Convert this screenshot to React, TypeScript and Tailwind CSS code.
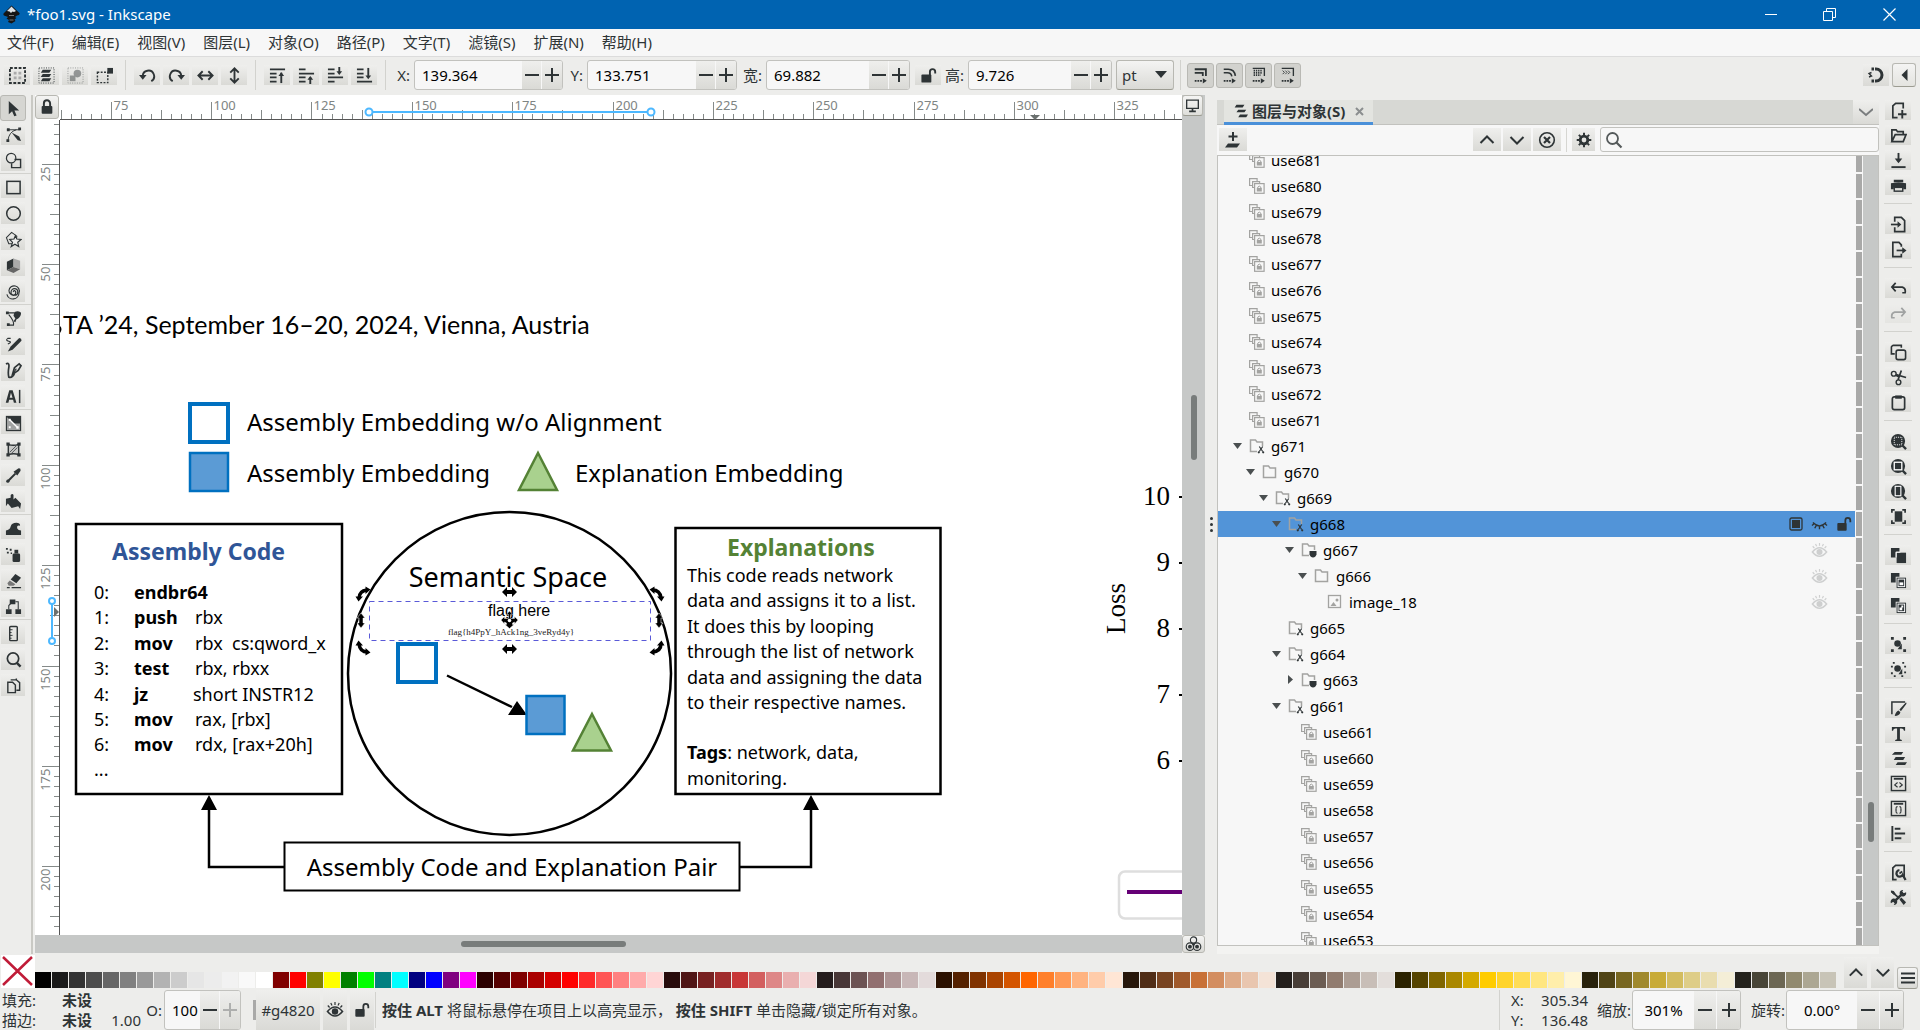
import React from 'react';

type Kids = { children?: React.ReactNode };

function Ico({ children, w = 18, h = 18, box = '0 0 18 18' }: Kids & { w?: number; h?: number; box?: string }) {
  return (
    <svg width={w} height={h} viewBox={box} fill="none" stroke="#2e3436" strokeWidth={1.5} aria-hidden="true" className="shrink-0">
      {children}
    </svg>
  );
}

const F = { fill: '#2e3436', stroke: 'none' };

function Btn({ label, children, className = 'h-5 w-[26px]' }: Kids & { label: string; className?: string }) {
  return (
    <button aria-label={label} title={label} className={'flex shrink-0 items-center justify-center bg-linear-to-b from-[#efefed] to-[#dadad6] ' + className}>
      {children}
    </button>
  );
}

function Sep({ className = 'mx-2' }: { className?: string }) {
  return <div className={'h-[30px] w-px shrink-0 bg-[#d2d2ce] ' + className} />;
}

const padlock = (
  <>
    <rect x="3" y="8" width="12" height="8.5" rx="1" {...F} />
    <path d="M5.5 8.5V5a3.5 3.5 0 0 1 7 0v3.5" strokeWidth="2.2" />
  </>
);
const openLock = (
  <>
    <rect x="1.5" y="8" width="10.5" height="8.5" rx="1" {...F} />
    <path d="M10.5 8.5V5a2.8 2.8 0 0 1 5.6 0v2" strokeWidth="2" />
  </>
);
const eye = (
  <>
    <path d="M1.500 10.500q7.500-9 15 0q-7.500 9-15 0z" strokeWidth="1.600" />
    <circle cx="9" cy="10.500" r="3.200" {...F} />
    <path d="M9 4V1M6 4.600L4.800 2M12 4.600L13.200 2M3.600 6.500L1.800 4.500M14.400 6.500l1.800-2" strokeWidth="1.200" />
  </>
);

/* ---------- Window header ---------- */

function TitleBar() {
  return (
    <header className="flex h-[29px] shrink-0 items-center bg-[#0063b1] pl-[3px] text-white">
      <svg width="17" height="19" viewBox="0 0 17 19" aria-hidden="true">
        <path d="M8.500 0.500L16.500 8q.8 2-2.500 2.500l-2 1.500 1.500 1-2 1.500 1 1.500L8.500 18.500 5 17l1-2-2.500-1.500L5 12 1 10.500Q-.2 9 1 8z" fill="#151515" />
        <path d="M8.500 1.500L13 6l-2 1-1.500-.6L8 8 6.500 6.500 4 6z" fill="#dfe3e6" />
        <path d="M6 10.500h5M6.500 15h4" stroke="#777" />
      </svg>
      <h1 className="ml-[7px] flex-1 truncate text-[15px]">*foo1.svg - Inkscape</h1>
      <button aria-label="最小化" className="flex h-full w-[58px] items-center justify-center">
        <svg width="12" height="12" stroke="#fff" aria-hidden="true"><path d="M0 5.500h12" /></svg>
      </button>
      <button aria-label="还原" className="flex h-full w-[58px] items-center justify-center">
        <svg width="13" height="13" stroke="#fff" fill="none" aria-hidden="true"><path d="M.5 3.500h9v9h-9zM3.500 3V.5h9v9H10" /></svg>
      </button>
      <button aria-label="关闭" className="flex h-full w-[62px] items-center justify-center">
        <svg width="13" height="13" stroke="#fff" strokeWidth="1.200" aria-hidden="true"><path d="M.5.5l12 12M12.500.5l-12 12" /></svg>
      </button>
    </header>
  );
}

const MENUS = ['文件(F)', '编辑(E)', '视图(V)', '图层(L)', '对象(O)', '路径(P)', '文字(T)', '滤镜(S)', '扩展(N)', '帮助(H)'];

function MenuBar() {
  return (
    <nav className="flex h-[28px] shrink-0 items-center gap-[18px] border-b border-[#dcdcdc] bg-[#f7f7f7] pl-[7px]">
      {MENUS.map((m) => (
        <button key={m}>{m}</button>
      ))}
    </nav>
  );
}

/* ---------- Tool options ---------- */

function Spin({ label, value, labelClass, className, center, dimPlus }: { label: string; value: string; labelClass: string; className: string; center?: boolean; dimPlus?: boolean }) {
  const bw = center ? 'w-[23px]' : 'w-5';
  return (
    <div className="flex h-full shrink-0 items-center">
      <label htmlFor={'f-' + label} className={'shrink-0 text-right ' + labelClass}>{label}</label>
      <div className={'flex h-full overflow-hidden rounded-[3px] border border-[#c2c2be] bg-[#f7f7f7] ' + className}>
        <input id={'f-' + label} defaultValue={value} className={'min-w-0 flex-1 bg-transparent text-black outline-none ' + (center ? 'text-center' : 'pl-[7px]')} />
        <button aria-label={label + ' −'} className={'flex items-center justify-center border-r border-[#f7f7f7] bg-linear-to-b from-[#efefed] to-[#dadad6] ' + bw}>
          <Ico w={14} h={14} box="0 0 14 14"><path d="M0 7h14" strokeWidth="2" /></Ico>
        </button>
        <button aria-label={label + ' +'} className={'flex items-center justify-center bg-linear-to-b from-[#efefed] to-[#dadad6] ' + bw}>
          <span className={dimPlus ? 'opacity-30' : ''}><Ico w={14} h={14} box="0 0 14 14"><path d="M0 7h14M7 0v14" strokeWidth="2" /></Ico></span>
        </button>
      </div>
    </div>
  );
}

const layer = (y: number) => <path key={y} d={`M5 ${y}h9l-2 3H3z`} {...F} />;

const BAR_GROUPS: { label: string; icon: React.ReactNode }[][] = [
  [
    { label: '全选', icon: <><rect x="1" y="1" width="16" height="16" strokeWidth="2" strokeDasharray="3 1.600" /><path d="M5 5h3v3H5zM10 5h3v3h-3zM5 10h3v3H5zM10 10h3v3h-3z" fill="#aaa" stroke="none" /></> },
    { label: '在所有图层中全选', icon: <><rect x="1" y="1" width="16" height="16" strokeWidth="1" strokeDasharray="1 1.500" />{layer(3)}{layer(7.5)}{layer(12)}</> },
    { label: '取消选择', icon: <g opacity=".45"><rect x="1" y="1" width="16" height="16" strokeWidth="1" strokeDasharray="1 1.500" /><circle cx="11" cy="7" r="4" {...F} /><path d="M3 9h6v6H3z" {...F} /></g> },
    { label: '触摸选择', icon: <><rect x="1.500" y="5.500" width="11" height="11" strokeDasharray="2 1.500" /><path d="M12 1h6v6h-6z" {...F} /></> },
  ],
  [
    { label: '逆时针旋转', icon: <><path d="M4 10a6 6 0 1 1 9 5" strokeWidth="2" /><path d="M0 8.500h8l-4 5z" {...F} /></> },
    { label: '顺时针旋转', icon: <><path d="M14 10a6 6 0 1 0-9 5" strokeWidth="2" /><path d="M10 8.500h8l-4 5z" {...F} /></> },
    { label: '水平翻转', icon: <path d="M2 9h14M6 4.500L1.500 9 6 13.500M12 4.500L16.500 9 12 13.500" strokeWidth="2" /> },
    { label: '垂直翻转', icon: <path d="M9 2v14M4.500 6L9 1.500 13.500 6M4.500 12L9 16.500 13.500 12" strokeWidth="2" /> },
  ],
  [
    { label: '置顶', icon: <><path d="M1 2.500h16M1 7h7M1 11h7M1 15.500h7" strokeWidth="2" /><path d="M13 6v11" strokeWidth="2" /><path d="M10 9.500h6l-3-4z" {...F} /></> },
    { label: '上移', icon: <><path d="M1 2.500h7M1 7h16M1 11h7M1 15.500h7" strokeWidth="2" /><path d="M13 11v7" strokeWidth="2" /><path d="M10 13.500h6l-3-4z" {...F} /></> },
    { label: '下移', icon: <><path d="M1 2.500h7M1 7h7M1 11h16M1 15.500h7" strokeWidth="2" /><path d="M13 0v6" strokeWidth="2" /><path d="M10 4.500h6l-3 4z" {...F} /></> },
    { label: '置底', icon: <><path d="M1 2.500h7M1 7h7M1 11h7M1 15.500h16" strokeWidth="2" /><path d="M13 1v9" strokeWidth="2" /><path d="M10 9h6l-3 4z" {...F} /></> },
  ],
];

const dashArrow = <><path d="M2 15.500h9" strokeDasharray="2 1" strokeWidth="2" /><path d="M11 12.500v6l4.500-3z" {...F} /></>;

const TOGGLES: { label: string; icon: React.ReactNode }[] = [
  { label: '缩放描边', icon: <><path d="M2 2.500h12.500V10M2 6.500h9V10" strokeWidth="2" />{dashArrow}</> },
  { label: '缩放圆角', icon: <><path d="M2 2.500h5q7 0 8 7.500M2 6.500h4q4.500 0 5 4" strokeWidth="1.800" />{dashArrow}</> },
  { label: '移动渐变', icon: <><path d="M2 1.500h13V10" /><path d="M3 4h9M3 6.500h9M3 9h8" strokeWidth="2" strokeDasharray="1.500 1" />{dashArrow}</> },
  { label: '移动图案', icon: <><path d="M2 1.500h13V10" /><path d="M3 4l2 2-2 2M6 4l2 2-2 2M9 4l2 2-2 2" strokeWidth="1" />{dashArrow}</> },
];

function OptionsBar() {
  return (
    <div className="flex h-[38px] shrink-0 items-center px-1 pb-[2px]">
      {BAR_GROUPS.map((g, i) => (
        <div key={i} className="flex shrink-0 items-center">
          <div className="flex gap-[3px]">
            {g.map((b) => (
              <Btn key={b.label} label={b.label}><Ico w={17} h={17}>{b.icon}</Ico></Btn>
            ))}
          </div>
          <Sep />
        </div>
      ))}
      <div className="flex h-[30px] shrink-0 items-center">
        <Spin label="X:" value="139.364" labelClass="w-5 pr-1" className="w-[149px]" />
        <Spin label="Y:" value="133.751" labelClass="w-6 pr-1" className="w-[150px]" />
        <Spin label="宽:" value="69.882" labelClass="w-[29px] pr-1" className="w-[144px]" />
        <Btn label="锁定宽高比" className="ml-[5px] h-5 w-[26px]"><Ico w={17} h={17}>{openLock}</Ico></Btn>
        <Spin label="高:" value="9.726" labelClass="w-[27px] pr-1" className="w-[144px]" />
        <div className="relative ml-1 h-full w-[58px]">
          <select aria-label="单位" className="h-full w-full appearance-none rounded-[3px] border border-[#b8b8b2] border-b-[#9c9c92] bg-linear-to-b from-[#f4f4f3] to-[#dadad6] pl-[5px] text-[15px]">
            <option>pt</option>
          </select>
          <svg width="12" height="8" className="pointer-events-none absolute right-[7px] top-[11px]" aria-hidden="true"><path d="M0 0h12L6 7z" fill="#2e3436" /></svg>
        </div>
      </div>
      <Sep className="mx-[6px]" />
      <div className="flex gap-[2px]">
        {TOGGLES.map((t) => (
          <button key={t.label} aria-label={t.label} aria-pressed="true" className="flex h-[25px] w-[27px] items-center justify-center rounded-[3px] border border-[#b9b9b4] bg-[#d2d2ce]">
            <Ico w={16} h={17} box="1 0 16 19">{t.icon}</Ico>
          </button>
        ))}
      </div>
      <div className="flex-1" />
      <Btn label="吸附" className="h-[22px] w-[26px]">
        <Ico>
          <path d="M8 3h1a6 6 0 0 1 0 12H8" strokeWidth="3" />
          <path d="M4.500 1.500H7v3H4.500zM4.500 13.500H7v3H4.500z" {...F} />
          <path d="M4.500 6.500L2 7.500 4.500 10 2 11" strokeWidth="1.400" />
        </Ico>
      </Btn>
      <button aria-label="吸附选项" className="ml-[3px] flex h-6 w-6 items-center justify-center rounded-[3px] border border-[#b8b8b2] border-b-[#9c9c92] bg-linear-to-b from-[#f4f4f3] to-[#e4e4e0]">
        <svg width="7" height="12" aria-hidden="true"><path d="M6.500 0v12L.5 6z" fill="#2e3436" /></svg>
      </button>
    </div>
  );
}

/* ---------- Left tool box ---------- */

const TOOLS: { label: string; icon: React.ReactNode }[][] = [
  [
    { label: '选择', icon: <path d="M4 1v14l3.500-3 2.300 5.300 2.500-1-2.300-5.300H15z" {...F} /> },
    { label: '节点', icon: <><path d="M3 16Q4 6 12 4M2 4h14" strokeWidth="1" /><path d="M2 2.500h3v3H2zM14 1.500h3v3h-3zM1.500 14h3v3h-3z" {...F} /><path d="M7 7l8 4 2 5-3.500-1z" {...F} /></> },
    { label: '形状生成', icon: <><circle cx="6.500" cy="6.500" r="5" strokeWidth="1.300" /><path d="M10 8h6.500v8.500H7V12" /></> },
  ],
  [
    { label: '矩形', icon: <rect x="2" y="2.500" width="14" height="13" strokeWidth="1.600" /> },
    { label: '椭圆', icon: <circle cx="9" cy="9" r="7.200" strokeWidth="1.600" /> },
    { label: '星形', icon: <><path d="M7 1.500l5.500 4-1 8H4L1.500 7z" strokeWidth="1.100" /><path d="M11 5l1.500 3.500 4.500.5-3.500 3 1 4.500-4-2.500-4 2.500 1.500-4.500-3-3 4.500-.5z" strokeWidth="1.200" fill="#ededeb" /></> },
    { label: '3D 盒子', icon: <><path d="M2 5l7-3.500v9L2 14z" {...F} /><path d="M9 1.500L16 4v9l-7-2.500z" fill="#aaa" stroke="none" /><path d="M2 14l7-3.500 7 2.500-7 4z" fill="#666" stroke="none" /></> },
    { label: '螺旋', icon: <path d="M9 9.500a1 1 0 0 1 1-1.500 2.500 2.500 0 1 1-3.500 1.500A3.500 3.500 0 1 1 10 13a5 5 0 0 1-5.800-5 5.500 5.500 0 1 1 10.600 2.500A6.500 6.500 0 0 1 2 12" strokeWidth="1.200" /> },
  ],
  [
    { label: '钢笔', icon: <><path d="M2 3h8M3 16h6Q10 12 4 5" strokeWidth="1.200" /><path d="M1 1.500h3v3H1zM2 14h3v3H2z" {...F} /><path d="M10 2q5-2 7 1 0 4-3 6l-2 1-1 3-2-1 2-3-2-3z" {...F} /></> },
    { label: '铅笔', icon: <><path d="M6 2.500H3q-3 2 1 3t-1 3" strokeWidth="1.200" /><path d="M17 3l-2-1L6 11l-3 5.500 5-2L17.500 5z" {...F} /></> },
    { label: '书法', icon: <><path d="M1 2q4-2 3 4t0 10q4 1 6-4" strokeWidth="1.800" /><path d="M8 13L10 6l5-4 2 2-3 5z" strokeWidth="1.800" /><path d="M8 13l4-6" strokeWidth="1.200" /></> },
    { label: '文本', icon: <><path d="M4.500 2.500h3.600l4 13H9.400l-.8-3H4.400l-.8 3H.8zM6.300 5L5 10.300h3z" fillRule="evenodd" {...F} /><path d="M15.500 2v14" strokeWidth="1.600" /></> },
  ],
  [
    { label: '渐变', icon: <><rect x="1.500" y="1.500" width="15" height="15" fill="#a0a2a2" strokeWidth="1.200" /><path d="M2 2h14v7L9 9z" {...F} /><path d="M5 5l8 8" stroke="#fff" /><path d="M4 4h2v2H4zM4 12h2v2H4zM12 12h2.500v2.500H12z" fill="#fff" stroke="none" /></> },
    { label: '网格', icon: <><path d="M3.500 3.500q5 2 11 0v11q-5-2-11 0z" fill="#c9cac8" /><path d="M1.500 1.500h3.500v3.500H1.500zM13 1.500h3.500v3.500H13zM1.500 13h3.500v3.500H1.500zM13 13h3.500v3.500H13z" {...F} /><path d="M5 12l7-7M7 13l6-6" strokeWidth=".8" /></> },
    { label: '吸管', icon: <><path d="M3 15L11 7" strokeWidth="2.200" /><path d="M9 5l4 4 3.500-5q.5-3-2.500-2.500z" {...F} /><circle cx="3" cy="15" r="1.700" {...F} /></> },
    { label: '油漆桶', icon: <path d="M1 6l5-1V2q2-2 3 0v5l2-2 6 6-1 6-2-3-7 2-4-5-2 3z" {...F} /> },
  ],
  [
    { label: '调整', icon: <path d="M1 16v-5q4 0 5-4t6-4q4 0 4 3-4-1-3 3 1 2 4 2v5z" {...F} /> },
    { label: '喷涂', icon: <><rect x="8" y="8" width="8" height="9" rx="1.500" {...F} /><path d="M10 4h4v4h-4z" {...F} /><path d="M1 2h2v2H1zM5 3h2v2H5zM2 6h2v2H2zM6 7h1.500v1.500H6z" {...F} /></> },
    { label: '橡皮', icon: <><path d="M6 8l5-6 6 4-5 6z" {...F} /><path d="M5 9l6 4-2 1.500H4L2.500 12z" fill="#777" stroke="none" /><path d="M2 16.500h3M7 16.500h10" strokeWidth="1.400" /></> },
    { label: '连接', icon: <><path d="M5 1.500h6v5H5zM1 12h6v5H1zM11 12h6v5h-6z" {...F} /><path d="M4 12V8l3-3M11 4h3v8" strokeWidth="1.100" /></> },
  ],
  [
    { label: '测量', icon: <><rect x="5" y="1.500" width="8" height="15" rx="1" /><path d="M5 5h3M5 8h2M5 11h3M5 14h2" strokeWidth="1" /></> },
    { label: '缩放', icon: <><circle cx="8.500" cy="8" r="6" strokeWidth="1.800" /><path d="M12.500 12.500l4 4" strokeWidth="2.600" /></> },
    { label: '页面', icon: <><path d="M3 5.500h5l3 3v8H3z" /><path d="M6 3h6l3.500 3v8H12M12 3V1.500" /></> },
  ],
];

function ToolBox() {
  return (
    <aside className="flex w-[33px] shrink-0 flex-col border-r-2 border-[#c9c9c4]">
      {TOOLS.map((g, i) => (
        <div key={i} className={'flex flex-col ' + (i ? 'border-t border-[#d2d2ce]' : '')}>
          {g.map((t, j) => (
            <div key={t.label} className="flex h-[26px] items-center">
              {i + j === 0 ? (
                <button aria-label={t.label} aria-pressed="true" className="flex h-[26px] w-[26px] items-center justify-center rounded-[3px] border border-[#b9b9b4] bg-[#d6d6d2]"><Ico w={17} h={17}>{t.icon}</Ico></button>
              ) : (
                <Btn label={t.label} className="ml-px h-[22px] w-6"><Ico w={17} h={17}>{t.icon}</Ico></Btn>
              )}
            </div>
          ))}
        </div>
      ))}
    </aside>
  );
}

/* ---------- Rulers ---------- */

const STEP = 10.034;

function RulerX() {
  return (
    <svg width="100%" height="25" className="block" fontSize="13" fill="#7e8483" aria-hidden="true">
      <path d="M0 24.500h2400" stroke="#555" />
      {Array.from({ length: 112 }, (_, k) => {
        const i = k - 5;
        const x = Math.round(50.8 + i * STEP) + 0.5;
        const major = i % 10 === 0;
        return (
          <g key={k}>
            <path d={`M${x} ${major ? 7 : Math.abs(i % 10) === 5 ? 15 : 19}V24`} stroke="#858a89" />
            {major && <text x={x + 2} y="15">{75 + (i / 10) * 25}</text>}
          </g>
        );
      })}
      <path d="M309 17h282" stroke="#4db8ff" strokeWidth="2" />
      <circle cx="309" cy="17" r="3.500" fill="#fff" stroke="#4db8ff" strokeWidth="2" />
      <circle cx="591" cy="17" r="3.500" fill="#fff" stroke="#4db8ff" strokeWidth="2" />
      <path d="M970 20h10l-5 5z" fill="#6b706f" />
    </svg>
  );
}

function RulerY() {
  return (
    <svg width="25" height="100%" className="block" fontSize="13" fill="#7e8483" aria-hidden="true">
      <path d="M24.500 0v1600" stroke="#555" />
      {Array.from({ length: 82 }, (_, k) => {
        const i = k - 4;
        const y = Math.round(43.8 + i * STEP) + 0.5;
        const major = i % 10 === 0;
        return (
          <g key={k}>
            <path d={`M${major ? 7 : Math.abs(i % 10) === 5 ? 15 : 19} ${y}H24`} stroke="#858a89" />
            {major && <text textAnchor="end" transform={`translate(15 ${y + 2}) rotate(-90)`}>{25 + (i / 10) * 25}</text>}
          </g>
        );
      })}
      <path d="M17 481v40" stroke="#4db8ff" strokeWidth="2" />
      <circle cx="17" cy="481" r="3" fill="#fff" stroke="#4db8ff" strokeWidth="2" />
      <circle cx="17" cy="521" r="3" fill="#fff" stroke="#4db8ff" strokeWidth="2" />
      <path d="M19 487v10l5-5z" fill="#6b706f" />
    </svg>
  );
}

/* ---------- Drawing ---------- */

const CODE: [string, string, string][] = [
  ['0:', 'endbr64', ''],
  ['1:', 'push', 'rbx'],
  ['2:', 'mov', 'rbx'],
  ['3:', 'test', 'rbx, rbxx'],
  ['4:', 'jz', 'short INSTR12'],
  ['5:', 'mov', 'rax, [rbx]'],
  ['6:', 'mov', 'rdx, [rax+20h]'],
];
const CODE_Y = [599, 624, 650, 675, 701, 726, 751];
const EXPLAIN = ['This code reads network', 'data and assigns it to a list.', 'It does this by looping', 'through the list of network', 'data and assigning the data', 'to their respective names.'];
const EXPLAIN_Y = [582, 607, 633, 658, 684, 709];

function Rotate({ x, y, a }: { x: number; y: number; a: number }) {
  return (
    <g transform={`translate(${x} ${y}) rotate(${a})`}>
      <path d="M-4 4.500q0-7.500 8-8.500" stroke="#000" strokeWidth="3.500" fill="none" />
      <path d="M-7.500 2.500h7.500L-4.500 7.500zM2.500-7.500v7.500L7.500-4.500z" />
    </g>
  );
}

function Drawing() {
  return (
    <svg width="1122" height="815" viewBox="60 120 1122 815" className="block max-w-none" fontFamily='"Noto Sans", sans-serif' role="img" aria-label="foo1.svg">
      <g fontFamily="Lato, sans-serif" fontSize="25">
        <text x="63" y="334">TA ’24, September 16–20, 2024, Vienna, Austria</text>
        <path d="M60 326q3 3 0 7z" />
      </g>

      <rect x="190" y="404" width="38" height="38" fill="none" stroke="#0070c0" strokeWidth="4" />
      <rect x="190" y="453" width="38" height="38" fill="#5b9bd5" stroke="#0070c0" strokeWidth="2.500" />
      <path d="M538 453l19 37h-38z" fill="#a9d18e" stroke="#548235" strokeWidth="2.500" />
      <g fontSize="24">
        <text x="247" y="431">Assembly Embedding w/o Alignment</text>
        <text x="247" y="482">Assembly Embedding</text>
        <text x="575" y="482">Explanation Embedding</text>
      </g>

      <g fill="none" stroke="#000" strokeWidth="2.500">
        <rect x="76" y="524" width="266" height="270" />
        <rect x="675.500" y="528" width="265" height="266" />
        <circle cx="509.500" cy="673.500" r="161.500" />
        <rect x="284.500" y="842.500" width="455" height="48" strokeWidth="2" />
        <path d="M284 867h-75v-60M740 867h71v-60" />
        <path d="M447 675.500L512 707" />
      </g>
      <path d="M209 795l8 15h-16zM811 795l8 15h-16zM527 715h-19l9-14z" />

      <text x="112" y="560" fontSize="23" fontWeight="700" fill="#2f5597">Assembly Code</text>
      <g fontSize="18">
        {CODE.map(([n, op, arg], i) => (
          <g key={n}>
            <text x="94" y={CODE_Y[i]}>{n}</text>
            <text x="134" y={CODE_Y[i]} fontWeight="700">{op}</text>
            <text x={i === 4 ? 193 : 195} y={CODE_Y[i]}>{arg}</text>
          </g>
        ))}
        <text x="232" y="650">cs:qword_x</text>
        <text x="94" y="776">...</text>
      </g>

      <text x="727" y="556" fontSize="23" fontWeight="700" fill="#548235">Explanations</text>
      <g fontSize="18">
        {EXPLAIN.map((t, i) => (
          <text key={t} x="687" y={EXPLAIN_Y[i]}>{t}</text>
        ))}
        <text x="687" y="759"><tspan fontWeight="700">Tags</tspan>: network, data,</text>
        <text x="687" y="785">monitoring.</text>
      </g>

      <text x="512" y="876" fontSize="24" textAnchor="middle">Assembly Code and Explanation Pair</text>
      <text x="508" y="587" fontSize="27" textAnchor="middle">Semantic Space</text>
      <text x="488" y="616" fontSize="16" fontFamily='"Liberation Sans", sans-serif'>flag here</text>
      <text x="448" y="635" fontSize="9" fontFamily='"Liberation Serif", serif' fill="#222">{'flag{h4PpY_hAck1ng_3veRyd4y}'}</text>

      <rect x="398" y="644" width="38" height="38" fill="none" stroke="#0070c0" strokeWidth="4" />
      <rect x="526.500" y="696" width="38" height="38" fill="#5b9bd5" stroke="#0070c0" strokeWidth="2.500" />
      <path d="M592 714l19 36.500h-38z" fill="#a9d18e" stroke="#548235" strokeWidth="2.500" />

      <rect x="369.500" y="601.500" width="281" height="39" fill="none" stroke="#5a5ad8" strokeDasharray="5 4" />
      <Rotate x={363} y={594} a={0} />
      <Rotate x={657} y={594} a={90} />
      <Rotate x={657} y={648} a={180} />
      <Rotate x={363} y={648} a={270} />
      {[592, 649].map((y) => (
        <path key={y} d={`M502 ${y}l5-5v3h5v-3l5 5-5 5v-3h-5v3z`} />
      ))}
      {[361, 659].map((x) => (
        <path key={x} d={`M${x} 613l4 5h-2v5h2l-4 5-4-5h2v-5h-2z`} stroke="#fff" strokeWidth=".5" />
      ))}
      <path d="M509.500 611l3 3.500h-2v4h4v-2l3.500 3.500-3.500 4v-2l-2 1v1.500h1.500l-4.500 4-4.500-4h1.500v-1.500l-2-1v2l-3.500-4 3.500-3.500v2h4v-4h-2z" stroke="#fff" strokeWidth=".4" />
      <circle cx="509.500" cy="620.500" r="1.800" fill="#fff" />

      <g fontFamily='"Liberation Serif", serif' fontSize="27">
        {[['10', 505], ['9', 571], ['8', 637], ['7', 703], ['6', 769]].map(([t, y]) => (
          <g key={t}>
            <text x="1170" y={y} textAnchor="end">{t}</text>
            <rect x="1179" y={Number(y) - 9} width="3" height="2" />
          </g>
        ))}
        <text transform="translate(1125 634) rotate(-90)">Loss</text>
      </g>
      <rect x="1119" y="871.500" width="120" height="47" rx="6" fill="none" stroke="#dedede" strokeWidth="2.500" />
      <path d="M1127 892h60" stroke="#650076" strokeWidth="4" />
    </svg>
  );
}

function CanvasArea() {
  return (
    <main className="mb-px ml-[2px] grid min-w-0 flex-1 grid-cols-[25px_minmax(0,1fr)_23px] grid-rows-[25px_minmax(0,1fr)_18px] overflow-hidden">
      <div className="bg-white">
        <button aria-label="锁定参考线" className="flex h-6 w-6 items-center justify-center rounded-[3px] border border-[#b8b8b2] bg-linear-to-b from-[#f4f4f3] to-[#dadad6]"><Ico w={16} h={16}>{padlock}</Ico></button>
      </div>
      <div className="overflow-hidden bg-white"><RulerX /></div>
      <div className="bg-[#c6c8c7]">
        <button aria-label="显示模式" className="flex h-[21px] w-[21px] items-center justify-center rounded-[3px] border border-[#b8b8b2] border-b-[#9c9c92] bg-linear-to-b from-[#f4f4f3] to-[#dfdfdb]">
          <Ico w={15} h={15}><path d="M2 2.500h14v10H2z" strokeWidth="1.600" /><path d="M5 16h8M9 13v3" strokeWidth="2" /></Ico>
        </button>
      </div>
      <div className="overflow-hidden bg-white"><RulerY /></div>
      <div className="overflow-hidden bg-white"><Drawing /></div>
      <div className="flex justify-center bg-[#c6c8c7] pt-[275px]"><div className="h-[65px] w-[6px] rounded-full bg-[#787c7b]" /></div>
      <div className="col-span-2 flex items-center bg-[#c6c8c7] pl-[426px]"><div className="h-[6px] w-[165px] rounded-full bg-[#787c7b]" /></div>
      <button aria-label="色彩管理" className="flex items-center justify-center rounded-[3px] border border-[#b8b8b2] bg-linear-to-b from-[#f4f4f3] to-[#dadad6]">
        <Ico w={17} h={16}><circle cx="9" cy="4.500" r="3.500" strokeWidth="1.300" /><circle cx="5" cy="12" r="4.200" strokeWidth="1.300" /><circle cx="13" cy="12" r="4.200" strokeWidth="1.300" /><circle cx="5" cy="12" r="2.200" {...F} /><circle cx="13" cy="12" r="2.200" {...F} /><circle cx="9" cy="9.500" r="1.500" {...F} /></Ico>
      </button>
    </main>
  );
}

/* ---------- Layers and objects ---------- */

type Kind = 'use' | 'clip' | 'group' | 'mask' | 'image';
type Row = { name: string; level: number; kind: Kind; open?: boolean; eye?: boolean; selected?: boolean };

const uses = (from: number, to: number, level: number): Row[] =>
  Array.from({ length: from - to + 1 }, (_, i) => ({ name: 'use' + (from - i), level, kind: 'use' as Kind }));

const ROWS: Row[] = [
  ...uses(681, 671, 0),
  { name: 'g671', level: 0, kind: 'clip', open: true },
  { name: 'g670', level: 1, kind: 'group', open: true },
  { name: 'g669', level: 2, kind: 'clip', open: true },
  { name: 'g668', level: 3, kind: 'clip', open: true, selected: true },
  { name: 'g667', level: 4, kind: 'mask', open: true, eye: true },
  { name: 'g666', level: 5, kind: 'group', open: true, eye: true },
  { name: 'image_18', level: 6, kind: 'image', eye: true },
  { name: 'g665', level: 3, kind: 'clip' },
  { name: 'g664', level: 3, kind: 'clip', open: true },
  { name: 'g663', level: 4, kind: 'mask', open: false },
  { name: 'g661', level: 3, kind: 'clip', open: true },
  ...uses(661, 653, 4),
];

function KindIcon({ kind }: { kind: Kind }) {
  return (
    <svg width="16" height="16" viewBox="0 0 16 16" fill="none" stroke="#a3a3a1" strokeWidth="1.300" className="shrink-0" aria-hidden="true">
      {kind === 'use' && <><path d="M3.500 7.500H.6V.6h7.500v2.600" strokeWidth="1.200" /><path d="M5.500 9.500H3.600V3.600h7V5" strokeWidth="1.200" /><rect x="5.600" y="5.600" width="9.500" height="9.700" strokeWidth="1.200" fill="#f7f7f7" /><rect x="7.800" y="10" width="5" height="3.500" fill="#a3a3a1" stroke="none" /><path d="M8.800 10.500V9q1.500-1.800 3 0v1.500" strokeWidth="1" /></>}
      {kind === 'image' && <><rect x="1.500" y="1.500" width="12" height="12" /><path d="M3.500 12l3-4 3 4z" fill="#a3a3a1" stroke="none" /><circle cx="10" cy="6" r="1.500" fill="#a3a3a1" stroke="none" /></>}
      {kind !== 'use' && kind !== 'image' && <path d={kind === 'group' ? 'M1.500 2h5l1.500 2h5.500v9.500h-12z' : 'M8 13.500H1.500V2h5L8 4h5.500v4'} strokeWidth="1.500" />}
      {kind === 'clip' && <><path d="M10.300 8.500l3.400 5M13.700 8.500l-3.400 5" stroke="#2e3436" strokeWidth="1.200" /><circle cx="9.800" cy="14.300" r="1.100" fill="#2e3436" stroke="none" /><circle cx="14.200" cy="14.300" r="1.100" fill="#2e3436" stroke="none" /></>}
      {kind === 'mask' && <path d="M8.500 9h7v3.500q-1 3-3.500 3t-3.500-3z" fill="#2e3436" stroke="none" />}
    </svg>
  );
}

function TreeRow({ row }: { row: Row }) {
  return (
    <li className="flex h-[26px] gap-px">
      <div
        className={'flex min-w-0 flex-1 items-center ' + (row.selected ? 'bg-[#5294d8]' : '')}
        style={{ paddingLeft: 14 + row.level * 13 }}
      >
        <span className="flex w-3 shrink-0 justify-center">
          {row.open !== undefined && (
            <svg width="10" height="10" fill="#4a4f50" aria-hidden="true">{row.open ? <path d="M0 2h9l-4.500 6z" /> : <path d="M3 0v9l5-4.500z" />}</svg>
          )}
        </span>
        <span className="ml-[5px] flex"><KindIcon kind={row.kind} /></span>
        <span className="ml-[6px] flex-1 text-black">{row.name}</span>
        {row.selected && (
          <span className="flex items-center gap-2 pr-[3px]">
            <Ico w={14} h={14} box="0 0 14 14"><rect x="1" y="1" width="12" height="12" rx="1.500" strokeWidth="1.300" /><rect x="3" y="3" width="8" height="8" {...F} /></Ico>
            <Ico w={17} h={17}><path d="M2 7q7 7 14 0M9 10.500V14M5.500 10L4 13M12.500 10l1.500 3M3 8.500L1 10M15 8.500l2 1.500" /></Ico>
            <Ico w={16} h={16}>{openLock}</Ico>
          </span>
        )}
        {row.eye && <span className="pr-[27px] opacity-20"><Ico w={17} h={17}>{eye}</Ico></span>}
      </div>
      <span className="my-px w-[6px] bg-[#a9a9a8]" />
    </li>
  );
}

function LayersPanel() {
  return (
    <section className="mt-[5px] flex w-[662px] shrink-0 flex-col bg-[#f3f3f1]" aria-label="图层与对象">
      <div className="flex h-[25px] shrink-0 items-stretch border-b border-[#c2c2be] bg-[#d7d8d4] pl-[7px]">
        <button className="-mb-px flex items-center border-b-[3px] border-[#4a90d9] bg-[#e3e4e0] pl-2 pr-2 font-bold">
          <Ico w={16} h={16}><path d="M5 2h9l-2 3H3zM7 7.500h9l-2 3H5zM9 13h9l-2 3H7z" {...F} /></Ico>
          <span className="ml-[4px] text-[15px]">图层与对象(S)</span>
          <span className="ml-2 flex w-3 justify-center"><svg width="9" height="9" stroke="#8b8e8f" strokeWidth="2" aria-hidden="true"><path d="M1 1l7 7M8 1L1 8" /></svg></span>
        </button>
        <div className="flex-1" />
        <Btn label="面板菜单" className="h-full w-[26px]"><svg width="14" height="9" fill="none" stroke="#7a7d7e" strokeWidth="2" aria-hidden="true"><path d="M0 1l7 6 7-6" /></svg></Btn>
      </div>
      <div className="flex h-[30px] shrink-0 items-center bg-[#f7f7f7] pb-px pl-[2px]">
        <Btn label="添加图层" className="h-[23px] w-7"><Ico><path d="M9 1v9M4.500 5.500h9" strokeWidth="2" /><path d="M4 12.500h12l-3 4H1z" {...F} /></Ico></Btn>
        <div className="flex-1" />
        <div className="flex gap-[2px]">
          <Btn label="上移" className="h-[23px] w-7"><Ico><path d="M2.500 12L9 5.500l6.500 6.500" strokeWidth="2" /></Ico></Btn>
          <Btn label="下移" className="h-[23px] w-7"><Ico><path d="M2.500 6L9 12.500 15.500 6" strokeWidth="2" /></Ico></Btn>
          <Btn label="删除" className="h-[23px] w-7"><Ico><circle cx="9" cy="9" r="7.300" strokeWidth="1.600" /><path d="M6 6l6 6M12 6l-6 6" strokeWidth="2.200" /></Ico></Btn>
        </div>
        <div className="mx-[5px] h-6 w-px bg-[#d6d6d2]" />
        <Btn label="设置" className="h-[23px] w-[23px]"><Ico w={16} h={16}><circle cx="9" cy="9" r="4.300" strokeWidth="3.200" /><path d="M9 .8v3M9 14.200v3M.8 9h3M14.200 9h3M3.200 3.200l2 2M12.800 12.800l2 2M14.800 3.200l-2 2M5.200 12.800l-2 2" strokeWidth="2.200" /></Ico></Btn>
        <label className="ml-[5px] flex h-[25px] w-[279px] items-center rounded-[3px] border border-[#c2c2be] pl-1">
          <Ico><circle cx="7.500" cy="7.500" r="5.500" stroke="#555a5b" strokeWidth="1.800" /><path d="M11.500 11.500l5 5" stroke="#555a5b" strokeWidth="2.200" /></Ico>
          <input type="search" aria-label="搜索" className="min-w-0 flex-1 bg-transparent px-1 outline-none" />
        </label>
      </div>
      <div className="flex min-h-0 flex-1 overflow-hidden border border-[#c2c2be] bg-[#f7f7f7]">
        <ul className="-mt-[9px] min-w-0 flex-1">
          {ROWS.map((r) => <TreeRow key={r.name} row={r} />)}
        </ul>
        <div className="ml-px flex w-[15px] justify-center bg-[#c6c8c7] pt-[646px]"><div className="h-10 w-[6px] rounded-full bg-[#787c7b]" /></div>
      </div>
      <div className="h-2 shrink-0" />
    </section>
  );
}

/* ---------- Command bar ---------- */

const page = 'M8 16.500H3V4l3-2.500h8V7';
const mag = <><circle cx="8.500" cy="8.500" r="7.500" {...F} /><path d="M13 13l4 4" strokeWidth="2.500" /></>;
const clones = (inner: React.ReactNode) => <><path d="M1 1h9v4H6v6H1z" {...F} /><path d="M7 6h10v11H7z" {...F} />{inner}</>;
const corners = <path d="M1 1h3v3H1zM14 1h3v3h-3zM1 14h3v3H1zM14 14h3v3h-3z" {...F} />;

const COMMANDS: { label: string; icon: React.ReactNode; dim?: boolean }[][] = [
  [
    { label: '新建', icon: <><path d={page} strokeWidth="1.800" /><path d="M13 8.500v9M8.500 13h9" strokeWidth="2" /></> },
    { label: '打开', icon: <path d="M2 15.500V3h4.500L8 5h6v3M2 15.500L5.500 8H17l-3 7.500z" strokeWidth="1.800" /> },
    { label: '保存', icon: <><path d="M9 1v9" strokeWidth="2" /><path d="M5 7l4 5 4-5z" {...F} /><path d="M1.500 16h15" strokeWidth="2" /></> },
    { label: '打印', icon: <><path d="M4 3h10v2.500H4zM1 6.500q8-1.500 16 0V13h-3v-2H4v2H1z" {...F} /><rect x="4.500" y="11" width="9" height="4" /></> },
  ],
  [
    { label: '导入', icon: <><path d="M5 6V1.500h7L15.500 5v11.500H5V12" strokeWidth="1.800" /><path d="M1 9h8" strokeWidth="1.800" /><path d="M8 5.500v7l4-3.500z" {...F} /></> },
    { label: '导出', icon: <><path d="M12 6V4L9.500 1.500H3v15h9v-3" strokeWidth="1.800" /><path d="M7 10h7" strokeWidth="1.800" /><path d="M13 6.500v7l4.500-3.500z" {...F} /></> },
  ],
  [
    { label: '撤销', icon: <path d="M6 3L2 7.500 6 12M2 7.500h11q4 1 3 6h-3" strokeWidth="1.800" /> },
    { label: '重做', dim: true, icon: <path d="M12 3l4 4.500L12 12M16 7.500H5q-4 1-3 6h3" strokeWidth="1.800" /> },
  ],
  [
    { label: '复制', icon: <><path d="M5 10.500H1.500V3q1-1.500 2-1.500H12V4" strokeWidth="1.700" /><rect x="6.500" y="6.500" width="10" height="10" rx="2" strokeWidth="1.700" /></> },
    { label: '剪切', icon: <><circle cx="4" cy="5" r="2.500" /><circle cx="9" cy="14" r="2.500" /><path d="M6.500 6L17 9M8.500 11.500L12 1.500M6 6.500l4 2" strokeWidth="1.800" /></> },
    { label: '粘贴', icon: <><rect x="2.500" y="3" width="13" height="13.500" rx="2" strokeWidth="1.800" /><path d="M5.500 1.500h7V5h-7z" {...F} /></> },
  ],
  [
    { label: '缩放到选区', icon: <>{mag}<rect x="4.500" y="4.500" width="8" height="8" stroke="#fff" strokeWidth="1" strokeDasharray="1 1" /></> },
    { label: '缩放到绘图', icon: <>{mag}<rect x="4.500" y="4.500" width="8" height="8" stroke="#fff" strokeWidth="1.400" /></> },
    { label: '缩放到页面', icon: <>{mag}<rect x="5.500" y="3.500" width="6" height="10" stroke="#fff" strokeWidth="1.200" /></> },
    { label: '页面居中', icon: <><path d="M5 3.500h8v11H5z" {...F} /><path d="M2 5V2h3M16 5V2h-3M2 13v3h3M16 13v3h-3" strokeWidth="1.800" /></> },
  ],
  [
    { label: '再制', icon: clones(<path d="M6.500 11V5.500H11" stroke="#fff" strokeWidth="1" />) },
    { label: '克隆', icon: clones(<><rect x="8.500" y="7.500" width="7" height="8" stroke="#fff" strokeWidth="1" /><path d="M10 11h4v3h-4z" fill="#fff" stroke="none" /></>) },
    { label: '取消克隆', icon: clones(<><rect x="8.500" y="7.500" width="7" height="8" stroke="#fff" strokeWidth="1" /><path d="M10 11h3v3h-3zM12 9h2v2h-2z" fill="#fff" stroke="none" /></>) },
  ],
  [
    { label: '群组', icon: <>{corners}<circle cx="8" cy="8" r="3.500" {...F} /><path d="M12.500 8v6H8z" {...F} /></> },
    { label: '解组', icon: <><path d="M3 1h2v2H3zM1 5h2v2H1zM13 1h2v2h-2zM15 5h2v2h-2zM1 12h2v2H1zM4 15h2v2H4zM15 11h2v2h-2zM12 15h2v2h-2z" {...F} /><circle cx="8" cy="8" r="3.500" {...F} /><path d="M13 8v6H9z" {...F} /></> },
  ],
  [
    { label: '填充与描边', icon: <><path d="M2 15V2h14" strokeWidth="1.600" /><path d="M17 2.500L10 10l1.500 2L17.500 4zM9 11l2 2q-1 4-6 4 1-5 4-6z" {...F} /></> },
    { label: '文本', icon: <path d="M2 2h14v4h-1.200Q14.500 3.600 12 3.600h-1.500V15l2 .8V17h-7v-1.200l2-.8V3.600H6Q3.500 3.600 3.200 6H2z" {...F} /> },
    { label: '图层', icon: <path d="M5 2h9l-2 3H2zM6 7.500h10l-2 3H4zM8 13h10l-2 3H6z" {...F} /> },
    { label: 'XML', icon: <><rect x="1.500" y="1.500" width="15" height="15" /><path d="M4 4h10" strokeWidth="2" /><path d="M8 8l-3 2.500L8 13M10 8l3 2.500-3 2.500" strokeWidth="1.200" /></> },
    { label: '选择器', icon: <><rect x="1.500" y="1.500" width="15" height="15" /><path d="M4 4h10" strokeWidth="2" /><path d="M8 7q-2 0-1.500 3-1 .5 0 1-.5 3 1.500 3M10 7q2 0 1.500 3 1 .5 0 1 .5 3-1.500 3" strokeWidth="1.100" /></> },
    { label: '对齐', icon: <path d="M2.500 1v16M5 4h6M5 9h11M5 14h7" strokeWidth="2" /> },
  ],
  [
    { label: '文档属性', icon: <><path d="M7 16.500H3V4l3-2.500h9V14" strokeWidth="1.800" /><path d="M10 6.500a3.500 3.500 0 1 0 3.500 5L16.500 17" strokeWidth="2.400" /><path d="M10 10l3-2" strokeWidth="1.800" /></> },
    { label: '首选项', icon: <><path d="M4 14L14 4" strokeWidth="2.600" /><path d="M17 3.500a3.500 3.500 0 1 1-3-2.500l-1 2 1.500 1.500zM1 15a3.500 3.500 0 1 1 3 2l1-2-1.500-1.500z" {...F} /><path d="M2 3l8 7" strokeWidth="1.800" /><path d="M1 1.500l3 .5 2 3-2 1-3-2.500zM10 11l2-2 5 5-2.500 3z" {...F} /></> },
  ],
];

function CommandBar() {
  return (
    <aside className="mt-[5px] flex w-[41px] shrink-0 flex-col items-center pl-px pr-1">
      {COMMANDS.map((g, i) => (
        <div key={i} className={'flex flex-col items-center gap-[5px] ' + (i ? 'mt-2 border-t border-[#d2d2ce] px-px pt-[10px]' : '')}>
          {g.map((c) => (
            <Btn key={c.label} label={c.label} className={'h-5 w-[26px] ' + (c.dim ? 'opacity-40' : '')}><Ico w={17} h={17}>{c.icon}</Ico></Btn>
          ))}
        </div>
      ))}
    </aside>
  );
}

/* ---------- Palette ---------- */

const PALETTE = (
  '000000 1a1a1a 333333 4d4d4d 666666 808080 999999 b3b3b3 cccccc e6e6e6 ececec f2f2f2 f9f9f9 ffffff ' +
  '800000 ff0000 808000 ffff00 008000 00ff00 008080 00ffff 000080 0000ff 800080 ff00ff ' +
  '2b0000 550000 800000 aa0000 d40000 ff0000 ff2a2a ff5555 ff8080 ffaaaa ffd5d5 ' +
  '280b0b 501616 782121 a02c2c c83737 d35f5f de8787 e9afaf f4d7d7 241c1c 483737 6c5353 916f6f ac9393 c8b7b7 e3dbdb ' +
  '2b1100 552200 803300 aa4400 d45500 ff6600 ff7f2a ff9955 ffb380 ffccaa ffe6d5 ' +
  '28170b 502d16 784421 a05a2c c87137 d38d5f deaa87 e9c6af f4e3d7 241f1c 483e37 6c5d53 917c6f ac9d93 c8beb7 e3dedb ' +
  '2b2200 554400 806600 aa8800 d4aa00 ffcc00 ffd42a ffdd55 ffe680 ffeeaa fff6d5 ' +
  '28220b 504416 786721 a0892c c8ab37 d3bc5f decd87 e9ddaf f4eed7 24221c 484537 6c6753 918a6f aca793 c8c4b7'
).split(' ');

function Palette() {
  return (
    <div className="flex h-[36px] shrink-0 items-end">
      <button aria-label="无" className="mb-[2px] ml-px h-[33px] w-[34px] bg-white">
        <svg width="34" height="33" stroke="#c01c38" strokeWidth="2.500" aria-hidden="true"><path d="M2 2l29 28M31 2L2 30" /></svg>
      </button>
      <div className="mb-[2px] flex h-4 flex-1 gap-px">
        {PALETTE.map((c, i) => (
          <button key={i} aria-label={'#' + c} className="min-w-0 flex-1" style={{ backgroundColor: '#' + c }} />
        ))}
      </div>
      <Btn label="上一行" className="mb-[2px] ml-2 h-[31px] w-[23px]"><Ico w={16} h={16}><path d="M2 12l7-7 7 7" strokeWidth="2.200" /></Ico></Btn>
      <Btn label="下一行" className="mb-[2px] ml-1 h-[31px] w-[23px]"><Ico w={16} h={16}><path d="M2 5l7 7 7-7" strokeWidth="2.200" /></Ico></Btn>
      <button aria-label="调色板菜单" className="mb-px mr-[2px] ml-[3px] flex h-[22px] w-[21px] items-center justify-center rounded-[3px] border border-[#b8b8b2] border-b-[#9c9c92] bg-linear-to-b from-[#f4f4f3] to-[#dadad6]">
        <Ico w={14} h={14} box="0 0 14 14"><path d="M0 2.500h14M0 7h14M0 11.500h14" strokeWidth="2" /></Ico>
      </button>
    </div>
  );
}

/* ---------- Status bar ---------- */

function StatusBar() {
  return (
    <footer className="flex h-[40px] shrink-0 items-center overflow-hidden">
      <dl className="grid w-[141px] shrink-0 grid-cols-[60px_1fr_auto] pl-[2px] leading-5">
        <dt>填充:</dt><dd className="col-span-2 font-bold">未设</dd>
        <dt>描边:</dt><dd className="font-bold">未设</dd><dd>1.00</dd>
      </dl>
      <Spin label="O:" value="100" labelClass="w-[23px] pr-[2px]" className="w-[77px]" dimPlus />
      <div className="ml-[12px] h-5 w-[3px] bg-[#a9a9a8]" />
      <div className="flex h-full gap-[3px]">
        <button className="h-full w-16 bg-linear-to-b from-[#efefed] to-[#dadad6]">#g4820</button>
        <Btn label="可见性" className="h-full w-6"><Ico>{eye}</Ico></Btn>
        <Btn label="锁定" className="h-full w-6"><Ico w={16} h={16}>{openLock}</Ico></Btn>
      </div>
      <div className="ml-px h-9 w-px bg-[#d2d2ce]" />
      <p className="ml-[6px] min-w-0 flex-1 truncate"><b>按住 ALT</b> 将鼠标悬停在项目上以高亮显示， <b>按住 SHIFT</b> 单击隐藏/锁定所有对象。</p>
      <div className="h-full w-px bg-[#d2d2ce]" />
      <dl className="grid w-[88px] shrink-0 grid-cols-[28px_1fr] pl-[11px] leading-5">
        <dt>X:</dt><dd className="text-right">305.34</dd>
        <dt>Y:</dt><dd className="text-right">136.48</dd>
      </dl>
      <Spin label="缩放:" value="301%" labelClass="w-[44px] pr-px" className="w-[109px]" center />
      <Spin label="旋转:" value="0.00°" labelClass="w-[45px] pr-px" className="w-[118px]" center />
      <div className="w-4 shrink-0" />
    </footer>
  );
}

export default function App() {
  return (
    <div className="flex h-screen flex-col overflow-hidden bg-[#ededeb] font-['Noto_Sans','Noto_Sans_CJK_SC',sans-serif] text-[15px] text-[#2e3436]">
      <TitleBar />
      <MenuBar />
      <OptionsBar />
      <div className="flex min-h-0 flex-1">
        <ToolBox />
        <CanvasArea />
        <div className="flex w-3 shrink-0 flex-col items-center justify-center gap-[3px]">
          <i className="h-[3px] w-[3px] rounded-full bg-[#2e3436]" />
          <i className="h-[3px] w-[3px] rounded-full bg-[#2e3436]" />
          <i className="h-[3px] w-[3px] rounded-full bg-[#2e3436]" />
        </div>
        <LayersPanel />
        <CommandBar />
      </div>
      <Palette />
      <StatusBar />
    </div>
  );
}
